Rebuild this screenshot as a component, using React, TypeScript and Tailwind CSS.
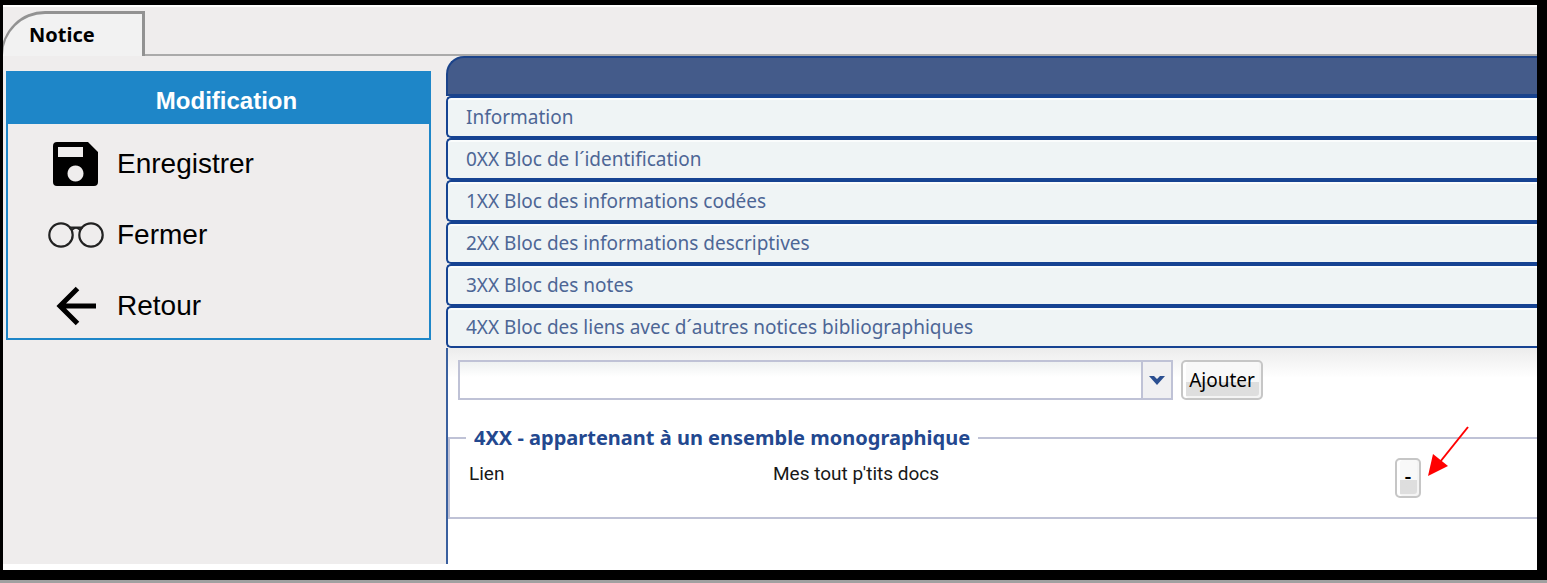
import { useState } from "react";

const blocks = [
	'Information',
	'0XX Bloc de l´identification',
	'1XX Bloc des informations codées',
	'2XX Bloc des informations descriptives',
	'3XX Bloc des notes',
	'4XX Bloc des liens avec d´autres notices bibliographiques',
]

const SaveIcon = () => (
	<svg width="46" height="44" viewBox="0 0 46 44" aria-hidden="true">
		<path fillRule="evenodd" d="M4 0H35L45 10V40Q45 44 41 44H4Q0 44 0 40V4Q0 0 4 0ZM5 5V15H30V5ZM22.500 23.500a8 8 0 1 0 .01 0Z" />
	</svg>
)

const GlassesIcon = () => (
	<svg width="56" height="26" viewBox="0 0 56 26" fill="none" stroke="#222" strokeWidth="2.200" aria-hidden="true">
		<circle cx="13" cy="13" r="11.700" />
		<circle cx="43" cy="13" r="11.700" />
		<path d="M21 5.500H35M24 8Q28 3.500 32 8" strokeWidth="1.800" />
	</svg>
)

const BackIcon = () => (
	<svg width="42" height="40" viewBox="0 0 42 40" fill="none" stroke="#000" strokeWidth="5" aria-hidden="true">
		<path d="M22.500 2.500L5 20L22.500 37.500M4 20H41" />
	</svg>
)

const actions = [
	{ label: 'Enregistrer', Icon: SaveIcon },
	{ label: 'Fermer', Icon: GlassesIcon },
	{ label: 'Retour', Icon: BackIcon },
]

const buttonStyle = "h-10 shrink-0 rounded-[5px] border-2 border-[#c6c6c6] bg-linear-to-b from-[#f8f8f8] from-55% to-[#dedede] to-55% shadow-[inset_3px_0_0_#fff,inset_-2px_-2px_0_#f4f4f4] text-black"

export default function App() {
	const [link, setLink] = useState("");

	return (
		<div className="min-h-screen flex flex-col bg-black border-b-3 border-[#a0a0a0] pt-[5px] pl-[3px] pr-2.5 pb-2.5 font-['Noto_Sans',sans-serif]">
			<div className="grow flex flex-col overflow-hidden bg-[#efeded] border-t-2 border-b-6 border-white">
				<nav className="flex items-end pt-1">
					<a
						href="#notice"
						className="-ml-0.5 w-36 h-[45px] pl-[26px] flex items-center rounded-tl-[44px] border-t-3 border-r-3 border-l-2 border-[#929292] bg-[#f2f2f2] text-xl leading-6 font-bold text-black"
					>
						Notice
					</a>
					<div className="grow border-b-2 border-[#aaa]" />
				</nav>

				<div className="grow flex">
					<aside className="w-[425px] shrink-0 ml-[3px] mr-[15px] mt-[15px] self-start border-2 border-[#1e86c8] font-['Liberation_Sans',Arial,sans-serif]">
						<h2 className="h-[51px] pl-4 pt-1 flex items-center justify-center bg-[#1e86c8] text-white text-2xl font-bold">Modification</h2>
						<ul className="pt-2 flex flex-col gap-[7px]">
							{actions.map(({ label, Icon }) => (
								<li key={label}>
									<button type="button" className="w-full h-16 pl-[39px] flex items-center gap-3 text-black text-[28px]">
										<span className="w-[58px] flex justify-center"><Icon /></span>
										{label}
									</button>
								</li>
							))}
						</ul>
					</aside>

					<main className="grow min-w-0 flex flex-col">
						<header className="h-10 shrink-0 rounded-tl-[18px] border-2 border-r-0 border-[#1b438a] bg-[#445b8a]" />
						{blocks.map(block => (
							<button
								key={block}
								type="button"
								className="h-[42px] shrink-0 px-[18px] text-left rounded-l-[5px] border-2 border-r-0 border-[#164392] bg-[#eff4f5] shadow-[inset_0_2px_0_#fafcfc] text-[#4d6695] text-[19px]"
							>
								{block}
							</button>
						))}

						<section className="grow border-l-2 border-[#3a609f] bg-white bg-linear-to-b from-[#ececec] to-white to-[30px]">
							<div className="flex items-center gap-2 pl-2.5 pt-3">
								<div className="relative w-[715px]">
									<select
										aria-label="Lien à ajouter"
										value={link}
										onChange={event => setLink(event.target.value)}
										className="block w-full h-10 px-2 appearance-none border-2 border-[#bfc2d6] bg-white bg-linear-to-b from-[#eef1f1] to-white to-[15px] text-[19px]"
									>
										<option value="" />
									</select>
									<span className="pointer-events-none absolute right-0 top-0 w-8 h-10 flex items-center justify-center border-2 border-[#bfc2d6] bg-[#f0f0f2]">
										<svg width="16" height="10" viewBox="0 0 16 10" aria-hidden="true">
											<path d="M0 1H5L8 4L11 1H16L8 10Z" fill="#2b4f91" />
										</svg>
									</span>
								</div>
								<button type="button" className={`${buttonStyle} w-[82px] text-[19px]`}>Ajouter</button>
							</div>

							<fieldset className="mt-6 h-[95px] border-2 border-r-0 border-[#bfc2d6]">
								<legend className="ml-4 px-2 text-[#23488f] text-xl leading-7 font-bold">4XX - appartenant à un ensemble monographique</legend>
								<div className="flex items-start pl-[19px] pt-1.5 text-[19px] text-[#181818] font-[Roboto,sans-serif]">
									<span className="w-[304px] leading-8">Lien</span>
									<span className="w-[622px] leading-8">Mes tout p'tits docs</span>
									<span className="relative">
										<button type="button" aria-label="Supprimer" className={`${buttonStyle} w-[26px] font-bold`}>-</button>
										<svg className="absolute left-8 -top-8" width="44" height="52" viewBox="0 0 44 52" aria-hidden="true">
											<path d="M41 1L13 36" stroke="#f00" strokeWidth="2" />
											<path d="M1 50L6 28L21 40Z" fill="#f00" />
										</svg>
									</span>
								</div>
							</fieldset>
						</section>
					</main>
				</div>
			</div>
		</div>
	)
}
